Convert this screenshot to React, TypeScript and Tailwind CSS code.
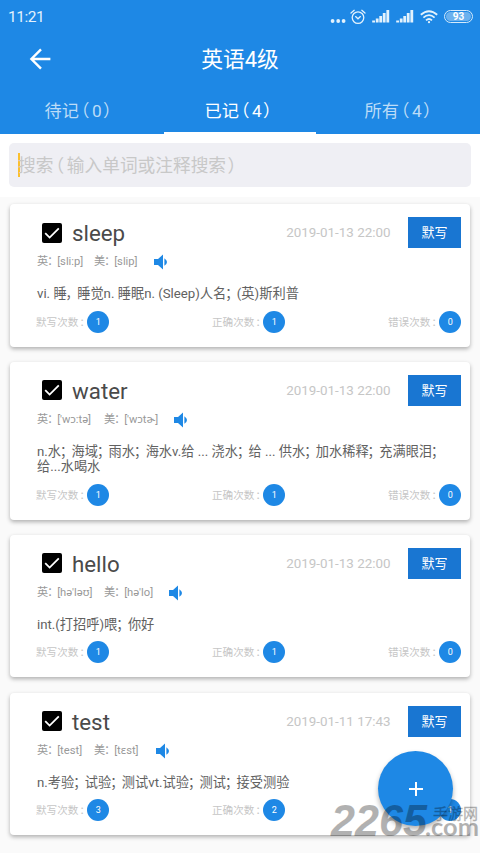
import React from "react";

type Entry = {
  word: string;
  time: string;
  uk: string;
  us: string;
  ukWidth: string;
  usWidth: string;
  lines: string[];
  counts: [number, number, number];
};

const entries: Entry[] = [
  {
    word: "sleep",
    time: "2019-01-13 22:00",
    uk: "[sli:p]",
    us: "[slip]",
    ukWidth: "w-[57px]",
    usWidth: "w-[59px]",
    lines: ["vi. 睡，睡觉n. 睡眠n. (Sleep)人名；(英)斯利普"],
    counts: [1, 1, 0],
  },
  {
    word: "water",
    time: "2019-01-13 22:00",
    uk: "['wɔ:tə]",
    us: "['wɔtɚ]",
    ukWidth: "w-[67px]",
    usWidth: "w-[69px]",
    lines: ["n.水；海域；雨水；海水v.给 ... 浇水；给 ... 供水；加水稀释；充满眼泪；", "给...水喝水"],
    counts: [1, 1, 0],
  },
  {
    word: "hello",
    time: "2019-01-13 22:00",
    uk: "[hə'ləʊ]",
    us: "[hə'lo]",
    ukWidth: "w-[67px]",
    usWidth: "w-[64px]",
    lines: ["int.(打招呼)喂；你好"],
    counts: [1, 1, 0],
  },
  {
    word: "test",
    time: "2019-01-11 17:43",
    uk: "[test]",
    us: "[tɛst]",
    ukWidth: "w-[57px]",
    usWidth: "w-[61px]",
    lines: ["n.考验；试验；测试vt.试验；测试；接受测验"],
    counts: [3, 2, 1],
  },
];

/* Full-width punctuation is set tighter than one em. */
function Tight({ text }: { text: string }) {
  return (
    <>
      {text.split(/([；：，（）])/).map((part, i) => {
        if (/^[；：，]$/.test(part)) {
          return (
            <span key={i} className="inline-flex w-[0.8em] justify-start whitespace-nowrap">
              <span className="-ml-[0.08em]">{part}</span>
            </span>
          );
        }
        if (part === "）") {
          return (
            <span key={i} className="inline-flex w-[0.8em] justify-start pl-[0.08em] whitespace-nowrap">
              {part}
            </span>
          );
        }
        if (part === "（") {
          return (
            <span key={i} className="inline-flex w-[0.76em] justify-end pr-[0.15em] whitespace-nowrap">
              {part}
            </span>
          );
        }
        return part;
      })}
    </>
  );
}

function Signal() {
  return (
    <svg width="18" height="13" viewBox="0 0 18 13" fill="#e3f2fd">
      <rect x="0.2" y="10.5" width="2.8" height="2" />
      <rect x="3.8" y="8.5" width="2.8" height="4" />
      <rect x="7.3" y="6" width="2.8" height="6.5" />
      <rect x="10.8" y="3" width="2.8" height="9.5" />
      <rect x="14.4" y="0" width="2.8" height="12.5" />
    </svg>
  );
}

function StatusBar() {
  return (
    <div className="flex h-8 items-center justify-between pt-px pr-[7px] pl-2 text-[#e3f2fd]">
      <span className="text-[15.5px] leading-5 tracking-[-0.5px]">11:21</span>
      <div className="flex items-center">
        <svg width="16" height="16" viewBox="0 0 16 16" fill="#e3f2fd">
          <circle cx="2.6" cy="12" r="1.9" />
          <circle cx="8.2" cy="12" r="1.9" />
          <circle cx="13.6" cy="12" r="1.9" />
        </svg>
        <svg className="ml-1" width="16" height="16" viewBox="0 0 16 16" fill="none" stroke="#e3f2fd" strokeWidth="1.3" strokeLinecap="round">
          <circle cx="8" cy="8.6" r="5.8" />
          <path d="M1 4 L4.2 1.3 M15 4 L11.8 1.3 M5.6 7.6 L8 9.8 L10.4 7.6" />
        </svg>
        <div className="ml-[6px]">
          <Signal />
        </div>
        <div className="ml-[6px]">
          <Signal />
        </div>
        <svg className="ml-[6px]" width="18" height="14" viewBox="0 0 18 14" fill="none" stroke="#e3f2fd" strokeWidth="1.8">
          <path d="M0.8 4.8 Q9 -2.4 17.2 4.8" />
          <path d="M3.4 7.6 Q9 2.6 14.6 7.6" />
          <path d="M6 10.3 Q9 7.6 12 10.3" />
          <circle cx="9" cy="12.2" r="1.1" fill="#e3f2fd" stroke="none" />
        </svg>
        <div className="ml-[6px] flex h-[13px] w-[29px] items-center justify-center rounded-full border border-[#d5eafb] p-px">
          <span className="flex h-full w-full items-center justify-center rounded-full bg-[#6bb1ee] text-[10px] leading-none font-bold text-white">
            93
          </span>
        </div>
      </div>
    </div>
  );
}

function Count({ label, value }: { label: string; value: number }) {
  return (
    <div className="flex w-[73px] items-center justify-between">
      <span className="relative top-px text-[10.6px] whitespace-nowrap text-[#c6c6c6]">
        {label}
        <span className="ml-px inline-block w-2 whitespace-nowrap">：</span>
      </span>
      <span className="flex size-[22px] shrink-0 items-center justify-center rounded-full bg-[#1e88e5] pt-px text-[9px] leading-none text-white">
        {value}
      </span>
    </div>
  );
}

function Card({ entry }: { entry: Entry }) {
  return (
    <article className="rounded-[4px] bg-white pt-[13px] pr-[9px] pb-[14px] pl-[27px] shadow-[0_2px_4px_rgba(0,0,0,0.3)]">
      <div className="flex h-[31px] items-center">
        <svg className="ml-[5px] shrink-0" width="20" height="20" viewBox="0 0 20 20">
          <rect width="20" height="20" rx="2" fill="#000" />
          <path d="M3.2 10.2 L7.6 14.6 L16.8 5.4" fill="none" stroke="#fff" strokeWidth="1.8" />
        </svg>
        <span className="mt-px ml-[10px] text-[22.3px] leading-[30px] text-[#4a4a4a]">{entry.word}</span>
        <span className="mt-px ml-auto text-[13.4px] text-[#c6c6c6]">{entry.time}</span>
        <button className="ml-[17.5px] h-[31px] w-[53px] bg-[#1976d2] pt-px text-[13px] text-white">默写</button>
      </div>
      <div className="mt-[5px] flex h-[18px] items-center text-[11.2px] whitespace-nowrap text-[#999]">
        <span className={`${entry.ukWidth} pt-px`}>
          <Tight text={"英：" + entry.uk} />
        </span>
        <span className={`${entry.usWidth} pt-px`}>
          <Tight text={"美：" + entry.us} />
        </span>
        <svg width="15" height="16" viewBox="0 0 15 16" fill="#1e88e5">
          <path d="M1 5 H5 L10 0.6 V15.4 L5 11 H1Z" />
          <path d="M11.4 4.2 Q16.6 8 11.4 11.8Z" />
        </svg>
      </div>
      <div className="mt-[15px]">
        {entry.lines.map((line) => (
          <div key={line} className="h-[15.5px] text-[13.23px] leading-[15.5px] whitespace-nowrap text-[#616161]">
            <Tight text={line} />
          </div>
        ))}
      </div>
      <div className="-ml-px mt-[9px] flex items-center justify-between">
        <Count label="默写次数" value={entry.counts[0]} />
        <Count label="正确次数" value={entry.counts[1]} />
        <Count label="错误次数" value={entry.counts[2]} />
      </div>
    </article>
  );
}

function Tab({ text, active }: { text: string; active?: boolean }) {
  return (
    <div className={`relative pt-px ${active ? "text-white" : "text-[#bcdcf7]"}`}>
      <Tight text={text} />
      {active && <span className="absolute bottom-0 left-1 h-[3px] w-[152px] bg-white" />}
    </div>
  );
}

export default function App() {
  return (
    <div className="relative h-[853px] w-[480px] overflow-hidden bg-[#fafafa] font-[Roboto,'Noto_Sans','Noto_Sans_CJK_SC',sans-serif]">
      <header className="h-[134px] bg-[#1e88e5] text-white">
        <StatusBar />
        <div className="grid h-[54px] grid-cols-[80px_1fr_80px] items-center">
          <svg className="ml-[29px]" width="22" height="22" viewBox="0 0 22 22" fill="none" stroke="#fff" strokeWidth="2.4">
            <path d="M12 1.4 L2.4 11 L12 20.6 M2.4 11 H21.4" />
          </svg>
          <h1 className="pt-[2px] text-center text-[21.8px] font-normal">英语4级</h1>
        </div>
        <nav className="grid h-12 grid-cols-3 text-center text-[17.2px] leading-[48px]">
          <Tab text="待记（0）" />
          <Tab text="已记（4）" active />
          <Tab text="所有（4）" />
        </nav>
      </header>
      <div className="h-[63px] bg-white px-[9px] pt-[9px]">
        <div className="flex h-[44px] items-center rounded-[5px] bg-[#efeff4] pl-[9px] text-[17.7px] text-[#c8c8c8]">
          <span className="h-6 w-[2px] bg-[#fbc02d]" />
          <span className="-ml-[2px] pt-[2px] whitespace-nowrap">
            <Tight text="搜索（输入单词或注释搜索）" />
          </span>
        </div>
      </div>
      <main className="flex flex-col gap-[15.2px] px-[10px] pt-[7px]">
        {entries.map((entry) => (
          <Card key={entry.word} entry={entry} />
        ))}
      </main>
      <button className="absolute top-[751px] left-[378px] flex size-[75px] items-center justify-center rounded-full bg-[#1e88e5] shadow-[0_3px_5px_rgba(0,0,0,0.3)]">
        <svg width="16" height="16" viewBox="0 0 16 16" stroke="#fff" strokeWidth="2">
          <path d="M8 1 V15 M1 8 H15" />
        </svg>
      </button>
      <div className="absolute top-[803px] left-[331px] h-[36px] w-[149px] text-black opacity-30">
        <svg className="overflow-visible" width="149" height="36" fill="#000" fontFamily="Liberation Sans, Arial, sans-serif">
          <text x="0" y="33" fontSize="45" fontWeight="700" fontStyle="italic" textLength="96" lengthAdjust="spacingAndGlyphs">
            2265
          </text>
          <text x="94" y="33" fontSize="24" fontWeight="700" fontFamily="Lato, sans-serif" textLength="54" lengthAdjust="spacingAndGlyphs">
            .com
          </text>
          <text x="102" y="16" fontSize="15" fontWeight="400" fontFamily="Noto Sans CJK SC, sans-serif" stroke="#000" strokeWidth="0.3">
            手游网
          </text>
        </svg>
      </div>
    </div>
  );
}
